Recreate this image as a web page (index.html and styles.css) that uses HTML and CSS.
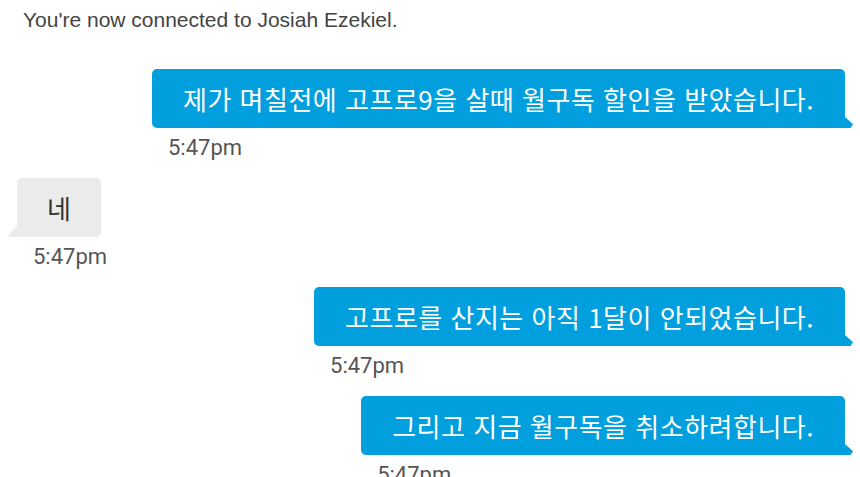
FILE: index.html
```html
<!DOCTYPE html>
<html lang="ko">
<head>
<meta charset="utf-8">
<link rel="stylesheet" href="styles.css">
</head>
<body>
<div class="chat">
  <p class="notice">You're now connected to Josiah Ezekiel.</p>
  <div class="msg sent">
    <div class="bubble">제가 며칠전에 고프로9을 살때 월구독 할인을 받았습니다.</div>
    <div class="time">5:47pm</div>
  </div>
  <div class="msg recv">
    <div class="bubble">네</div>
    <div class="time">5:47pm</div>
  </div>
  <div class="msg sent">
    <div class="bubble">고프로를 산지는 아직 1달이 안되었습니다.</div>
    <div class="time">5:47pm</div>
  </div>
  <div class="msg sent">
    <div class="bubble">그리고 지금 월구독을 취소하려합니다.</div>
    <div class="time">5:47pm</div>
  </div>
</div>
</body>
</html>
```

FILE: styles.css
```css
html, body {
  margin: 0;
  padding: 0;
  background: #ffffff;
  overflow: hidden;
}

.chat {
  display: flex;
  flex-direction: column;
  padding: 0 15px 0 17px;
}

.notice {
  margin: 8px 0 0 6px;
  font-family: "Liberation Sans", Arial, sans-serif;
  font-size: 21px;
  line-height: 24px;
  color: #444444;
}

.msg {
  display: flex;
  flex-direction: column;
  align-items: flex-start;
}

.msg.sent {
  align-self: flex-end;
  margin-top: 17px;
}

.notice + .msg.sent {
  margin-top: 37px;
}

.msg.recv {
  align-self: flex-start;
  margin-top: 17px;
}

.bubble {
  position: relative;
  height: 59px;
  box-sizing: border-box;
  display: flex;
  align-items: center;
  padding: 0 31px 0 31px;
  border-radius: 5px;
  font-family: "Noto Sans CJK KR", "Noto Sans", sans-serif;
  font-size: 26px;
  line-height: 32px;
  letter-spacing: 0.5px;
  white-space: nowrap;
}

.sent .bubble {
  background: #019fdd;
  color: #ffffff;
  border-bottom-right-radius: 0;
}

.sent .bubble::after {
  content: "";
  position: absolute;
  right: -8px;
  bottom: 0;
  width: 8px;
  height: 11px;
  background: #019fdd;
  clip-path: polygon(0 0, 100% 65%, 70% 100%, 0 100%);
}

.recv .bubble {
  background: #ebebeb;
  color: #333333;
  padding: 0 30px 0 30px;
  border-bottom-left-radius: 0;
}

.recv .bubble::after {
  content: "";
  position: absolute;
  left: -9px;
  bottom: 0;
  width: 9px;
  height: 11px;
  background: #ebebeb;
  clip-path: polygon(100% 0, 0 85%, 10% 100%, 100% 100%);
}

.time {
  margin: 7px 0 0 16px;
  font-family: Roboto, "DejaVu Sans Condensed", sans-serif;
  font-size: 22px;
  line-height: 26px;
  color: #555555;
}
```
